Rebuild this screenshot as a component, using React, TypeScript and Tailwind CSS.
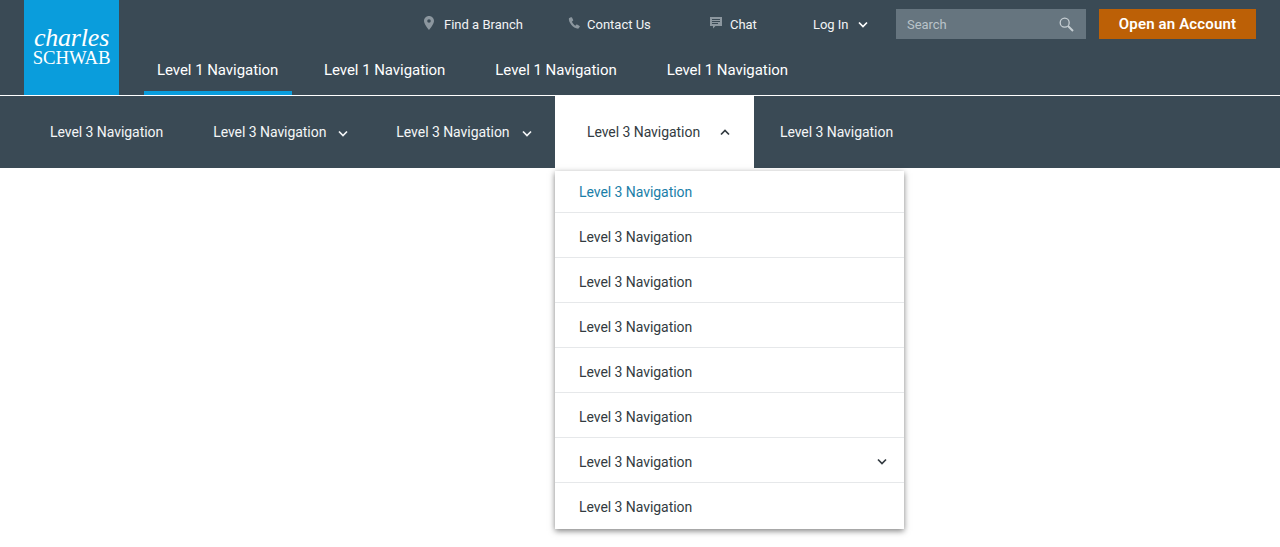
import React from "react";

const font = { fontFamily: '"Roboto", sans-serif' };

function Chevron({ up = false, className = "" }: { up?: boolean; className?: string }) {
  return (
    <svg width="10" height="7" viewBox="0 0 10 7" fill="none" className={`shrink-0 ${className}`}>
      <path
        d={up ? "M1 5.5L5 1.5L9 5.5" : "M1 1.5L5 5.5L9 1.5"}
        stroke="currentColor"
        strokeWidth="1.7"
      />
    </svg>
  );
}

function Pin() {
  return (
    <svg width="10" height="14" viewBox="0 0 10 14" className="shrink-0 -translate-y-[1px]">
      <path
        fillRule="evenodd"
        d="M5 0C2.2 0 0 2.2 0 5c0 3.4 5 9 5 9s5-5.600 5-9C10 2.200 7.800 0 5 0zm0 6.800A1.800 1.800 0 1 1 5 3.200a1.800 1.800 0 0 1 0 3.600z"
        fill="#8c979f"
      />
    </svg>
  );
}

function Phone() {
  return (
    <svg width="12" height="12" viewBox="0 0 12 12" className="shrink-0 -translate-y-[1px]">
      <path
        d="M2.800 0.300L0.900 1.200C0.300 4.900 4.700 11.300 10.200 11.700L11.800 9.700C11.900 9.400 11.800 9.200 11.600 9L9.100 7.500C8.800 7.400 8.600 7.400 8.400 7.600L7.400 8.700C5.900 8 4.300 5.900 4 4.500L5 3.700C5.200 3.500 5.300 3.300 5.200 3L4 0.500C3.700 0.200 3.200 0.100 2.800 0.300Z"
        fill="#8c979f"
      />
    </svg>
  );
}

function ChatIcon() {
  return (
    <svg width="12" height="12" viewBox="0 0 12 12" className="shrink-0 -translate-y-[1px]">
      <path
        fillRule="evenodd"
        d="M0 0H12V9H5.500L3 11.500V9H0ZM2 2V3H10V2ZM2 4V5H10V4ZM2 6V7H8V6Z"
        fill="#8c979f"
      />
    </svg>
  );
}

function SearchIcon() {
  return (
    <svg width="15" height="15" viewBox="0 0 15 15" fill="none" className="shrink-0">
      <circle cx="5.700" cy="5.700" r="4.500" stroke="#c6ced3" strokeWidth="1.300" />
      <path d="M9 9L14 14" stroke="#c6ced3" strokeWidth="2" />
    </svg>
  );
}

export default function App() {
  return (
    <div className="relative h-[547px] overflow-hidden bg-white text-[14px] tracking-[-0.05px]" style={font}>
      <header className="flex h-[95px] bg-[#3a4a55] pl-[24px] text-white">
        <div className="flex h-[95px] w-[95px] shrink-0 flex-col items-center bg-[#0a9ddc] pt-[26px]">
          <span
            className="h-[24px] text-[26px] leading-[24px] italic tracking-[-0.2px]"
            style={{ fontFamily: '"Liberation Serif", serif' }}
          >
            charles
          </span>
          <span
            className="text-[18.800px] leading-[16px] tracking-[-0.1px]"
            style={{ fontFamily: '"Liberation Serif", serif' }}
          >
            SCHWAB
          </span>
        </div>
        <div className="flex flex-1 flex-col">
          <div className="flex h-[48px] items-start pt-[9px]">
            <div className="ml-[305px] flex h-[30px] w-[100px] shrink-0 items-center">
              <Pin />
              <span className="ml-[10px] whitespace-nowrap pt-[2px] text-[13px] tracking-[0px] text-[#f2f4f5]">Find a Branch</span>
            </div>
            <div className="ml-[44px] flex h-[30px] w-[83px] shrink-0 items-center">
              <Phone />
              <span className="ml-[7px] whitespace-nowrap pt-[2px] text-[13px] tracking-[0px] text-[#f2f4f5]">Contact Us</span>
            </div>
            <div className="ml-[59px] flex h-[30px] w-[47px] shrink-0 items-center">
              <ChatIcon />
              <span className="ml-[8px] pt-[2px] text-[13px] text-[#f2f4f5]">Chat</span>
            </div>
            <div className="ml-[56px] flex h-[30px] w-[55px] shrink-0 items-center">
              <span className="whitespace-nowrap pt-[2px] text-[13px] text-[#f2f4f5]">Log In</span>
              <Chevron className="ml-auto" />
            </div>
            <div className="ml-[28px] flex h-[30px] w-[190px] shrink-0 items-center justify-between bg-[#66757f] pl-[11px] pr-[12px]">
              <span className="pt-[2px] text-[13px] text-[#b9c3c9]">Search</span>
              <SearchIcon />
            </div>
            <div className="ml-[13px] flex h-[30px] w-[157px] shrink-0 items-center justify-center bg-[#bc6006] text-[15px] font-semibold tracking-[0.15px]">
              Open an Account
            </div>
          </div>
          <nav className="flex h-[47px] text-[15px] tracking-[-0.05px]">
            <a className="ml-[25px] flex h-[47px] w-[148px] items-start justify-start border-b-[4px] border-[#0a9ddc] pl-[13px] pt-[11px]">
              Level 1 Navigation
            </a>
            <a className="ml-[32px] pt-[11px]">Level 1 Navigation</a>
            <a className="ml-[50px] pt-[11px]">Level 1 Navigation</a>
            <a className="ml-[50px] pt-[11px]">Level 1 Navigation</a>
          </nav>
        </div>
      </header>
      <div className="h-[1px] bg-white" />
      <div className="relative flex h-[72px] items-center bg-[#3a4a55] text-[#f4f6f7]">
        <span className="ml-[50px]">Level 3 Navigation</span>
        <span className="ml-[50px]">Level 3 Navigation</span>
        <Chevron className="ml-[12px] mt-[2px]" />
        <span className="ml-[48px]">Level 3 Navigation</span>
        <Chevron className="ml-[12px] mt-[2px]" />
        <div className="ml-[23.400px] flex h-[72px] w-[199px] shrink-0 items-center bg-white pl-[32px] text-[#333b41]">
          <span>Level 3 Navigation</span>
          <Chevron up className="ml-[20px]" />
        </div>
        <span className="ml-[26px]">Level 3 Navigation</span>
      </div>
      <div className="absolute left-[555px] top-[171px] w-[349px] bg-white text-[#333b41] shadow-[0_2px_6px_rgba(0,0,0,0.5)]">
        {Array.from({ length: 8 }).map((_, i) => (
          <div
            key={i}
            className={`flex items-center justify-between pl-[24px] pr-[17px] ${
              i === 0 ? "h-[42px] pt-[2px] text-[#1a7ea8]" : i === 7 ? "h-[46px] pt-[3px]" : "h-[45px] pt-[5px]"
            } ${i < 7 ? "border-b border-[#e6e8ea]" : ""}`}
          >
            <span>Level 3 Navigation</span>
            {i === 6 && <Chevron className="-mt-[2px]" />}
          </div>
        ))}
      </div>
    </div>
  );
}
